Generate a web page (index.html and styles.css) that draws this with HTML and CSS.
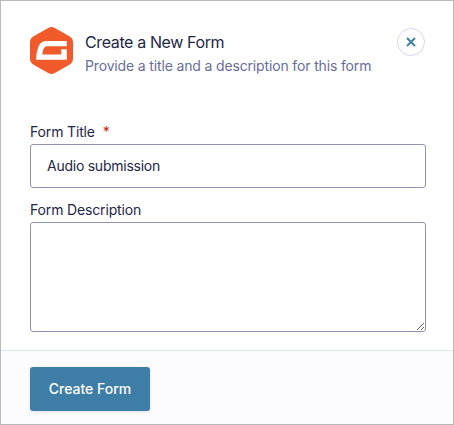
FILE: index.html
```html
<!DOCTYPE html>
<html lang="en">
  <head>
    <meta charset="UTF-8" />
    <meta name="viewport" content="width=device-width, initial-scale=1.0" />
    <title>Create a New Form</title>
    <link rel="stylesheet" href="styles.css">
  </head>
  <body>
    <form class="dialog">
      <header class="dialog-header">
        <svg class="logo" width="43" height="47" viewBox="0 0 43 47">
          <path fill="#f15a2b" d="M18.2 1Q21.5-.8 24.8 1L39.4 9.300Q43 11.500 43 15.200V31.800Q43 35.500 39.400 37.700L24.800 46Q21.500 47.800 18.200 46L3.600 37.700Q0 35.500 0 31.800V15.200Q0 11.500 3.600 9.300Z" />
          <path fill="#fff" d="M36.800 14V19.200H17.500C14.500 19.200 12.800 21.500 12.400 27.500H31.200V22.300H36.800V32.800H6C6.300 27 7.200 22.500 8.800 18.800C10.200 15.500 12.600 14 16.500 14Z" />
        </svg>
        <div class="heading">
          <h1 class="title">Create a New Form</h1>
          <p class="subtitle">Provide a title and a description for this form</p>
        </div>
        <button type="button" class="close" aria-label="Close">
          <svg width="10" height="10" viewBox="0 0 10 10">
            <path d="M1 1L9 9M9 1L1 9" fill="none" stroke="#3e7da6" stroke-width="1.900" />
          </svg>
        </button>
      </header>
      <div class="fields">
        <label class="label" for="form-title">Form Title <span class="required">*</span></label>
        <input class="input" id="form-title" type="text" value="Audio submission" />
        <label class="label" for="form-description">Form Description</label>
        <textarea class="input textarea" id="form-description"></textarea>
      </div>
      <footer class="dialog-footer">
        <button type="button" class="submit">Create Form</button>
      </footer>
    </form>
  </body>
</html>
```

FILE: styles.css
```css
* {
  margin: 0;
  padding: 0;
  box-sizing: border-box;
}

body {
  font-family: Inter, "Liberation Sans", sans-serif;
  color: #242748;
  background-color: #fff;
}

.dialog {
  display: flex;
  flex-direction: column;
  height: 425px;
  border: 1px solid #b9b9b9;
}

.dialog-header {
  display: flex;
  align-items: flex-start;
  padding: 26px 28px 0 29px;
}

.logo {
  flex: none;
}

.heading {
  flex: 1;
  padding: 3px 0 0 12px;
}

.title {
  font-size: 16px;
  font-weight: 400;
  line-height: 24px;
  letter-spacing: -0.38px;
}

.subtitle {
  font-size: 14px;
  line-height: 24px;
  letter-spacing: -0.15px;
  color: #686e99;
  white-space: nowrap;
}

.close {
  display: flex;
  flex: none;
  align-items: center;
  justify-content: center;
  width: 28px;
  height: 28px;
  margin-top: 1px;
  border: 1px solid #d5d7e9;
  border-radius: 50%;
  background-color: #fff;
}

.fields {
  padding: 44px 27px 0 29px;
}

.label {
  display: block;
  padding-bottom: 2px;
  font-size: 14px;
  line-height: 20px;
  letter-spacing: -0.15px;
}

.required {
  margin-left: 4px;
  color: #c02b0a;
}

.input {
  display: block;
  width: 100%;
  height: 44px;
  margin-bottom: 12px;
  padding: 0 16px 2px;
  border: 1px solid #9092b2;
  border-radius: 3px;
  background-color: #fff;
  color: #242748;
  font-family: inherit;
  font-size: 14px;
  letter-spacing: -0.25px;
}

.textarea {
  height: 110px;
  margin-bottom: 18px;
}

.dialog-footer {
  flex: 1;
  padding: 16px 29px 0;
  border-top: 1px solid #dfe6f0;
  background-color: #fcfcfe;
}

.submit {
  width: 120px;
  height: 44px;
  padding-bottom: 2px;
  border: none;
  border-radius: 3px;
  background-color: #3e7da6;
  box-shadow: 0 1px 3px rgba(36, 39, 72, 0.12);
  color: #fff;
  font-family: inherit;
  font-size: 14px;
  font-weight: 500;
}
```
